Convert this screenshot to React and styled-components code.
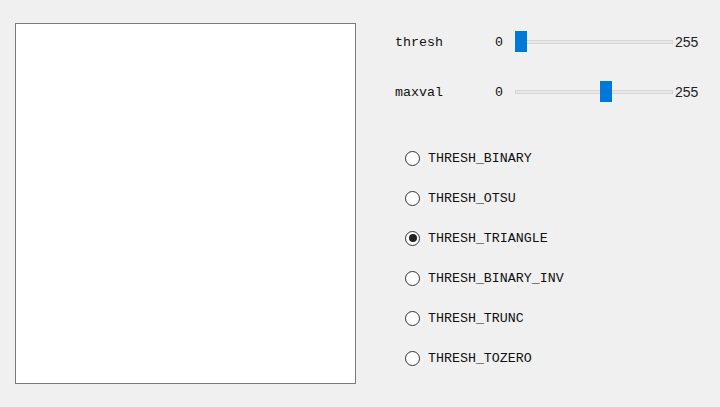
import React, { useState } from 'react';
import styled, { createGlobalStyle } from 'styled-components';

const GlobalStyle = createGlobalStyle`
  html, body {
    margin: 0;
    padding: 0;
    background: #f0f0f0;
  }
  body {
    font-family: "Liberation Mono", "DejaVu Sans Mono", monospace;
    font-size: 13.3px;
    color: #111;
  }
`;

const modes = [
  'THRESH_BINARY',
  'THRESH_OTSU',
  'THRESH_TRIANGLE',
  'THRESH_BINARY_INV',
  'THRESH_TRUNC',
  'THRESH_TOZERO'
];

const TRACK_W = 158;
const THUMB_W = 12;

const Slider = ({ value, max }) => {
  const left = Math.round((value / max) * (TRACK_W - THUMB_W));
  return (
    <Track>
      <Groove />
      <Thumb style={{ left }} />
    </Track>
  );
};

const App = () => {
  const [mode, setMode] = useState('THRESH_TRIANGLE');

  return (
    <Window>
      <GlobalStyle />
      <Canvas />
      <Panel>
        <SliderRow>
          <Label>thresh</Label>
          <MinText>0</MinText>
          <Slider value={0} max={255} />
          <MaxText>255</MaxText>
        </SliderRow>
        <SliderRow>
          <Label>maxval</Label>
          <MinText>0</MinText>
          <Slider value={148} max={255} />
          <MaxText>255</MaxText>
        </SliderRow>
        <RadioList>
          {modes.map((m) => (
            <RadioRow key={m} onClick={() => setMode(m)}>
              <RadioCircle $checked={mode === m} />
              <span>{m}</span>
            </RadioRow>
          ))}
        </RadioList>
      </Panel>
    </Window>
  );
};

export default App;

// Styles
const Window = styled.div`
  width: 720px;
  height: 407px;
  display: flex;
  align-items: flex-start;
  background: #f0f0f0;
  overflow: hidden;
`;

const Canvas = styled.div`
  margin: 23px 0 0 15px;
  width: 339px;
  height: 359px;
  background: #fff;
  border: 1px solid #7a7a7a;
`;

const Panel = styled.div`
  margin: 31px 0 0 39px;
  display: flex;
  flex-direction: column;
  gap: 28px;
`;

const SliderRow = styled.div`
  display: flex;
  align-items: center;
  height: 22px;
`;

const Label = styled.span`
  width: 100px;
`;

const MinText = styled.span`
  width: 20px;
`;

const MaxText = styled.span`
  margin-left: 2px;
  font-family: "Liberation Sans", Arial, sans-serif;
  font-size: 14px;
  color: #222;
`;

const Track = styled.div`
  position: relative;
  width: ${TRACK_W}px;
  height: 22px;
  display: flex;
  align-items: center;
`;

const Groove = styled.div`
  width: 100%;
  height: 4px;
  background: #e7e7e7;
  border: 1px solid #d6d6d6;
  box-sizing: border-box;
`;

const Thumb = styled.div`
  position: absolute;
  top: 0;
  width: ${THUMB_W}px;
  height: 21px;
  background: #0078d7;
`;

const RadioList = styled.div`
  margin-top: 17px;
  display: flex;
  flex-direction: column;
  gap: 20px;
`;

const RadioRow = styled.label`
  display: flex;
  align-items: center;
  height: 20px;
  gap: 8px;
  padding-left: 10px;
  cursor: pointer;
`;

const RadioCircle = styled.span`
  position: relative;
  width: 13px;
  height: 13px;
  border: 1px solid #333;
  border-radius: 50%;
  background: #fff;

  &::after {
    content: '';
    display: ${(p) => (p.$checked ? 'block' : 'none')};
    position: absolute;
    top: 2.5px;
    left: 2.5px;
    width: 8px;
    height: 8px;
    border-radius: 50%;
    background: #222;
  }
`;
